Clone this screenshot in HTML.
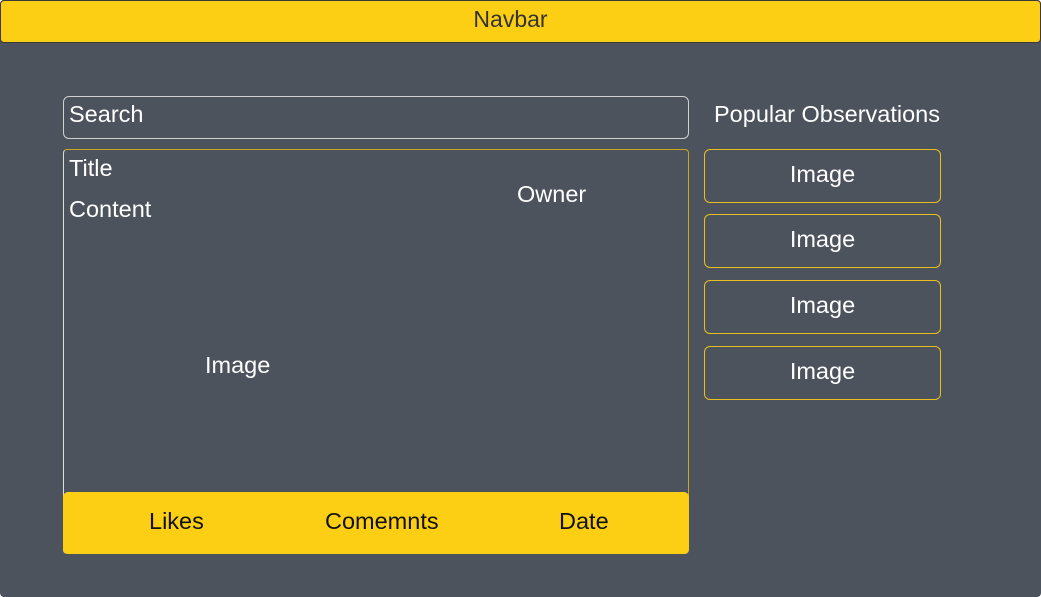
<!DOCTYPE html>
<html><head><style>
*{margin:0;padding:0;box-sizing:border-box}
body{width:1041px;height:597px;background:#fff;font-family:"Liberation Sans",sans-serif;position:relative;overflow:hidden}
.bg{position:absolute;left:0;top:0;width:1041px;height:597px;background:#4d535d;border-radius:4px}
.nav{position:absolute;left:0;top:0;width:1041px;height:43px;background:#fdcf14;border:1px solid #3a3a3a;border-radius:4px;color:#333;font-size:23px;text-align:center;line-height:37px;padding-right:20px}
.a{position:absolute;color:#fff;font-size:23.5px;line-height:1}
.search{position:absolute;left:63px;top:96px;width:626px;height:43px;border:1px solid #d0d0d0;border-radius:6px}
.card{position:absolute;left:63px;top:149px;width:626px;height:405px;border:1px solid #c9a820;border-left-color:#ddd;border-radius:4px}
.foot{position:absolute;left:63px;top:492px;width:626px;height:62px;background:#fdcf14;border-radius:5px}
.f{position:absolute;color:#111;font-size:23.5px;top:510px;line-height:1}
.img{position:absolute;left:704px;width:237px;height:54px;border:1px solid #e8c020;border-radius:6px;color:#fff;font-size:23.5px;text-align:center;line-height:48px}
</style></head><body>
<div class="bg"></div>
<div class="nav">Navbar</div>
<div class="search"></div>
<div class="a" style="left:69px;top:103px">Search</div>
<div class="a" style="left:714px;top:103px">Popular Observations</div>
<div class="card"></div>
<div class="a" style="left:69px;top:157px">Title</div>
<div class="a" style="left:69px;top:198px">Content</div>
<div class="a" style="left:517px;top:183px">Owner</div>
<div class="a" style="left:205px;top:354px">Image</div>
<div class="foot"></div>
<div class="f" style="left:149px">Likes</div>
<div class="f" style="left:325px">Comemnts</div>
<div class="f" style="left:559px">Date</div>
<div class="img" style="top:149px">Image</div>
<div class="img" style="top:214px">Image</div>
<div class="img" style="top:280px">Image</div>
<div class="img" style="top:346px">Image</div>
</body></html>
